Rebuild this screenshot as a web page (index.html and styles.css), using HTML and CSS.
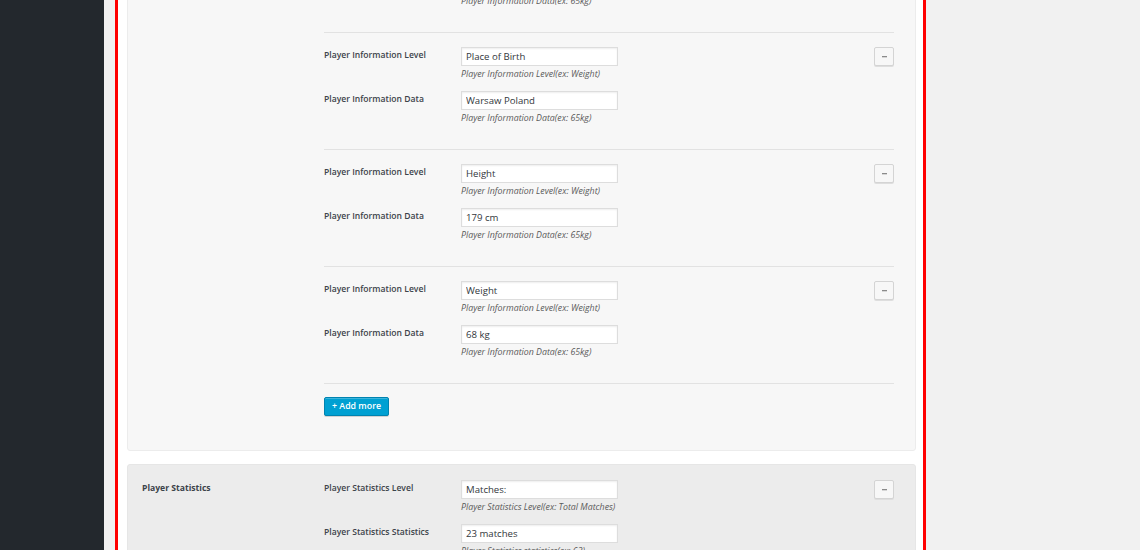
FILE: index.html
```html
<!DOCTYPE html>
<html lang="en">
<head>
<meta charset="utf-8">
<title>Player Settings</title>
<link rel="stylesheet" href="styles.css">
</head>
<body>
<div class="page">
  <aside class="sidebar"></aside>
  <main class="main">
    <div class="frame">
      <section class="panel panel-info">
        <div class="panel-title">Player Information</div>
        <div class="panel-body">
          <div class="group">
            <div class="fields">
              <div class="row">
                <label class="label">Player Information Level</label>
                <div class="field">
                  <input class="input" type="text" value="Nationality">
                  <p class="desc">Player Information Level(ex: Weight)</p>
                </div>
              </div>
              <div class="row">
                <label class="label">Player Information Data</label>
                <div class="field">
                  <input class="input" type="text" value="Polish">
                  <p class="desc">Player Information Data(ex: 65kg)</p>
                </div>
              </div>
            </div>
            <button class="remove" type="button"><span class="dash"></span></button>
          </div>

          <div class="group">
            <div class="fields">
              <div class="row">
                <label class="label">Player Information Level</label>
                <div class="field">
                  <input class="input" type="text" value="Place of Birth">
                  <p class="desc">Player Information Level(ex: Weight)</p>
                </div>
              </div>
              <div class="row">
                <label class="label">Player Information Data</label>
                <div class="field">
                  <input class="input" type="text" value="Warsaw Poland">
                  <p class="desc">Player Information Data(ex: 65kg)</p>
                </div>
              </div>
            </div>
            <button class="remove" type="button"><span class="dash"></span></button>
          </div>

          <div class="group">
            <div class="fields">
              <div class="row">
                <label class="label">Player Information Level</label>
                <div class="field">
                  <input class="input" type="text" value="Height">
                  <p class="desc">Player Information Level(ex: Weight)</p>
                </div>
              </div>
              <div class="row">
                <label class="label">Player Information Data</label>
                <div class="field">
                  <input class="input" type="text" value="179 cm">
                  <p class="desc">Player Information Data(ex: 65kg)</p>
                </div>
              </div>
            </div>
            <button class="remove" type="button"><span class="dash"></span></button>
          </div>

          <div class="group">
            <div class="fields">
              <div class="row">
                <label class="label">Player Information Level</label>
                <div class="field">
                  <input class="input" type="text" value="Weight">
                  <p class="desc">Player Information Level(ex: Weight)</p>
                </div>
              </div>
              <div class="row">
                <label class="label">Player Information Data</label>
                <div class="field">
                  <input class="input" type="text" value="68 kg">
                  <p class="desc">Player Information Data(ex: 65kg)</p>
                </div>
              </div>
            </div>
            <button class="remove" type="button"><span class="dash"></span></button>
          </div>

          <button class="add-btn" type="button">+ Add more</button>
        </div>
      </section>

      <section class="panel panel-stats">
        <div class="panel-title">Player Statistics</div>
        <div class="panel-body">
          <div class="group">
            <div class="fields">
              <div class="row">
                <label class="label">Player Statistics Level</label>
                <div class="field">
                  <input class="input" type="text" value="Matches:">
                  <p class="desc">Player Statistics Level(ex: Total Matches)</p>
                </div>
              </div>
              <div class="row">
                <label class="label">Player Statistics Statistics</label>
                <div class="field">
                  <input class="input" type="text" value="23 matches">
                  <p class="desc">Player Statistics statistics(ex: 63)</p>
                </div>
              </div>
            </div>
            <button class="remove" type="button"><span class="dash"></span></button>
          </div>
        </div>
      </section>
    </div>
  </main>
</div>
</body>
</html>
```

FILE: styles.css
```css
* { box-sizing: border-box; }

html, body {
  margin: 0;
  padding: 0;
  height: 550px;
  overflow: hidden;
  background: #f1f1f1;
}

body {
  font-family: "Open Sans", "Liberation Sans", sans-serif;
  font-size: 8.8px;
  color: #23282d;
}

.page {
  display: flex;
  height: 550px;
  overflow: hidden;
}

.sidebar {
  width: 104px;
  flex: none;
  background: #23282d;
}

.main {
  flex: 1;
  background: #f1f1f1;
  padding-left: 11px;
}

.frame {
  width: 811px;
  margin-top: -99px;
  border: 3px solid #ff0000;
  background: #ffffff;
  padding: 10px 7px 40px 9px;
}

.panel {
  display: flex;
  border: 1px solid #ececec;
  border-radius: 3px;
  background: #f7f7f7;
  padding: 15px 21px 34px 14px;
}

.panel-stats {
  margin-top: 13px;
  background: #ececec;
  border-color: #e6e6e6;
}

.panel-title {
  width: 182px;
  flex: none;
  padding-top: 2px;
  font-size: 8.6px;
  font-weight: 700;
  line-height: 12px;
  color: #3c434a;
}

.panel-info .panel-title {
  visibility: hidden;
}

.panel-body {
  flex: 1;
  display: flex;
  flex-direction: column;
  align-items: flex-start;
}

.group {
  align-self: stretch;
  display: flex;
  align-items: flex-start;
  padding: 14px 0 25px;
  border-bottom: 1px solid #e2e2e2;
}

.group:first-child {
  padding-top: 0;
}

.fields {
  flex: 1;
  display: flex;
  flex-direction: column;
}

.row {
  display: flex;
  align-items: flex-start;
  margin-bottom: 11px;
}

.row:last-child {
  margin-bottom: 0;
}

.label {
  width: 137px;
  flex: none;
  padding-top: 2px;
  font-size: 8.6px;
  font-weight: 600;
  line-height: 12px;
  color: #3c434a;
}

.field {
  width: 157px;
}

.input {
  display: block;
  width: 157px;
  height: 19px;
  margin: 0;
  padding: 0 4px;
  border: 1px solid #dddddd;
  background: #ffffff;
  box-shadow: inset 0 1px 2px rgba(0, 0, 0, 0.07);
  font-family: "Open Sans", "Liberation Sans", sans-serif;
  font-size: 9.6px;
  color: #32373c;
  outline: none;
}

.desc {
  margin: 2px 0 0;
  line-height: 12px;
  font-style: italic;
  color: #5a5a5a;
  white-space: nowrap;
}

.remove {
  width: 20px;
  height: 19px;
  flex: none;
  margin: 0;
  padding: 0;
  display: flex;
  align-items: center;
  justify-content: center;
  border: 1px solid #d4d4d4;
  border-radius: 2px;
  background: #f7f7f7;
  box-shadow: 0 1px 0 #dedede;
}

.dash {
  display: block;
  width: 5px;
  height: 1px;
  background: #8a8a8a;
  box-shadow: 0 0.5px 0 #b5b5b5;
}

.add-btn {
  margin-top: 13px;
  height: 19px;
  padding: 0 7px;
  border: 1px solid #0083b0;
  border-radius: 2px;
  background: #00a0d2;
  box-shadow: inset 0 1px 0 rgba(120, 200, 230, 0.5), 0 1px 0 rgba(0, 0, 0, 0.15);
  font-family: "Open Sans", "Liberation Sans", sans-serif;
  font-size: 8.8px;
  font-weight: 600;
  color: #ffffff;
  line-height: 17px;
}
```
